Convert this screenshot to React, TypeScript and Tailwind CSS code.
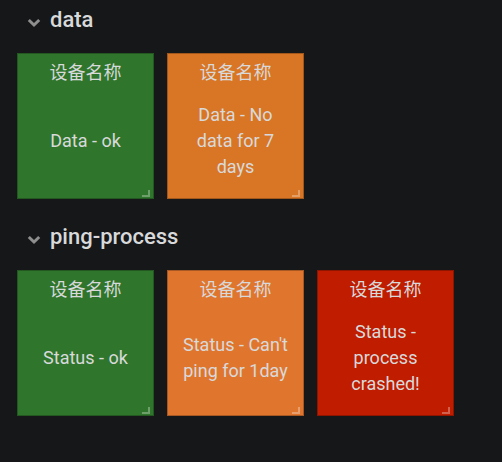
import React from "react";

type Panel = { name: string; message: string; color: string };
type Row = { title: string; panels: Panel[] };

const DEVICE = "设备名称";

const rows: Row[] = [
  {
    title: "data",
    panels: [
      { name: DEVICE, message: "Data - ok", color: "bg-[#2f762c]" },
      { name: DEVICE, message: "Data - No data for 7 days", color: "bg-[#d87625]" },
    ],
  },
  {
    title: "ping-process",
    panels: [
      { name: DEVICE, message: "Status - ok", color: "bg-[#2f762c]" },
      { name: DEVICE, message: "Status - Can't ping for 1day", color: "bg-[#e0762e]" },
      { name: DEVICE, message: "Status - process crashed!", color: "bg-[#bf1c00]" },
    ],
  },
];

function Chevron() {
  return (
    <svg className="mt-1 h-3 w-3.5 shrink-0" viewBox="0 0 14 12" fill="none" aria-hidden="true">
      <path d="M1.8 4 L7 9 L12.2 4" stroke="#8e8e8e" strokeWidth="3" />
    </svg>
  );
}

function StatusPanel({ name, message, color }: Panel) {
  return (
    <article className={`relative flex h-[146px] w-[137px] flex-col border border-black/25 ${color}`}>
      <h3 className="pt-[7px] text-center text-lg leading-6 font-normal">{name}</h3>
      <p className="flex flex-1 items-center justify-center px-3 pb-0.5 text-center text-lg leading-[26px]">
        {message}
      </p>
      <span className="absolute right-[3px] bottom-px h-[7px] w-2 border-r-2 border-b-2 border-white/30" />
    </article>
  );
}

export default function App() {
  return (
    <main className="min-h-screen bg-[#161719] pl-[17px] font-[Roboto,'Noto_Sans_CJK_SC',sans-serif] text-[#d8d9da]">
      {rows.map((row) => (
        <section key={row.title} className="pb-[18px]">
          <button type="button" className="flex h-[53px] items-start gap-[9px] pl-[10px] pt-[6px] text-[22px] leading-7 font-medium">
            <span className="flex h-7 items-center">
              <Chevron />
            </span>
            {row.title}
          </button>
          <div className="flex flex-wrap gap-x-[13px] gap-y-3">
            {row.panels.map((panel) => (
              <StatusPanel key={panel.message} {...panel} />
            ))}
          </div>
        </section>
      ))}
    </main>
  );
}
